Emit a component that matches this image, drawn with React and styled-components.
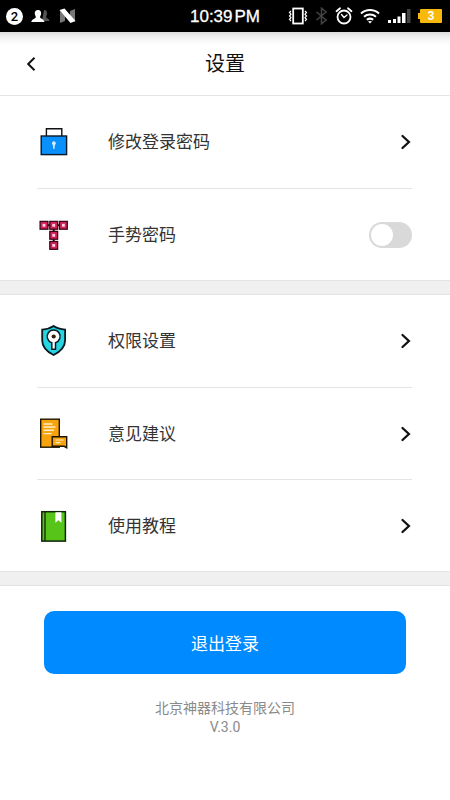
import React, { useState } from "react";
import styled, { createGlobalStyle } from "styled-components";

const GlobalStyle = createGlobalStyle`
  * { box-sizing: border-box; }
  body {
    margin: 0;
    background: #fff;
    color: #333;
    font-family: Roboto, "Noto Sans CJK SC", sans-serif;
  }
  button { font: inherit; color: inherit; border: 0; padding: 0; background: none; cursor: pointer; }
`;

const Page = styled.div`
  display: flex;
  flex-direction: column;
  min-height: 100vh;
  background: #fff;
`;

const StatusBar = styled.div`
  display: grid;
  grid-template-columns: 1fr auto 1fr;
  align-items: center;
  height: 32px;
  padding: 0 8px 0 6px;
  background: #000;
  color: #fff;
`;

const StatusGroup = styled.div`
  display: flex;
  align-items: center;
  justify-content: ${(p) => (p.$end ? "flex-end" : "flex-start")};
  gap: ${(p) => (p.$end ? 7 : 8)}px;
  min-width: 0;
  svg { flex: none; display: block; }
`;

const CountBadge = styled.span`
  width: 17px;
  height: 17px;
  border-radius: 50%;
  background: #fff;
  color: #000;
  font-size: 13px;
  font-weight: 500;
  line-height: 17px;
  text-align: center;
`;

const Clock = styled.time`
  display: flex;
  gap: 2px;
  padding: 2px 0 0 2px;
  font-family: "Liberation Sans", sans-serif;
  font-size: 17px;
  line-height: 20px;
  -webkit-text-stroke: 0.3px #fff;
`;

const Battery = styled.span`
  position: relative;
  width: 22px;
  height: 14px;
  margin-left: 2px;
  border-radius: 1px;
  background: #f8b80c;
  font-size: 12px;
  font-weight: 700;
  line-height: 14px;
  text-align: center;
  &::before {
    content: "";
    position: absolute;
    left: -2px;
    top: 4px;
    width: 2px;
    height: 6px;
    background: #f8b80c;
  }
`;

const Header = styled.header`
  display: grid;
  grid-template-columns: 48px 1fr 48px;
  align-items: center;
  height: 64px;
  border-bottom: 1px solid #e4e4e4;
  background: linear-gradient(#dedede, #f3f3f3 6px, #fff 13px);
`;

const BackButton = styled.button`
  display: flex;
  align-items: center;
  height: 48px;
  && { padding-left: 26px; }
  color: #111;
`;

const Title = styled.h1`
  margin: 0;
  color: #111;
  font-size: 20px;
  font-weight: 400;
  line-height: 28px;
  text-align: center;
`;

const Group = styled.section`
  padding: 0 38px 0 37px;
`;

const Band = styled.div`
  height: 15px;
  border: solid #e4e4e4;
  border-width: 1px 0;
  background: #f0f0f0;
`;

const Row = styled.div`
  display: flex;
  align-items: center;
  width: 100%;
  height: 92px;
  text-align: left;
  & + & { border-top: 1px solid #e4e4e4; }
  > svg { flex: none; }
`;

const Label = styled.span`
  flex: 1;
  margin-left: 39px;
  font-size: 17px;
  line-height: 24px;
`;

const Switch = styled.input`
  appearance: none;
  display: flex;
  align-items: center;
  width: 43px;
  height: 26px;
  margin: 0;
  padding: 2px;
  border-radius: 13px;
  background: ${(p) => (p.checked ? "#008aff" : "#d9d9d9")};
  cursor: pointer;
  &::before {
    content: "";
    width: 22px;
    height: 22px;
    margin-left: ${(p) => (p.checked ? 17 : 0)}px;
    border-radius: 50%;
    background: #fff;
  }
`;

const Footer = styled.footer`
  display: flex;
  flex-direction: column;
  padding: 25px 44px;
`;

const LogoutButton = styled.button`
  height: 63px;
  && { background: #008aff; color: #fff; }
  border-radius: 10px;
  && { font-size: 17px; }
`;

const Company = styled.p`
  margin: 24px 0 0;
  color: #8a8a8a;
  font-size: 14px;
  line-height: 20px;
  text-align: center;
`;

const Version = styled(Company)`
  margin: 0;
  line-height: 19px;
`;

const ChevronRight = () => (
  <svg width="12" height="16" viewBox="0 0 12 16" fill="none" stroke="#111" strokeWidth="2.3" aria-hidden="true">
    <path d="M2.500 2l6.400 6-6.400 6" strokeLinecap="round" />
  </svg>
);

const LockIcon = () => (
  <svg width="32" height="32" aria-hidden="true">
    <path d="M9.4 10V2.7h15.4V10" fill="none" stroke="#111" strokeWidth="1.4" />
    <rect x="4.2" y="10" width="25.400" height="18.6" fill="#0a90fb" stroke="#0b1824" strokeWidth="1.4" />
    <path d="M16.9 15.2a2 2 0 0 1 1 3.7l-.5 4h-1.1l-.4-4a2 2 0 0 1 1-3.7z" fill="#d5edff" />
  </svg>
);

const nodes = [[7, 6.3], [16.7, 6.3], [26.4, 6.3], [16.7, 16.3], [16.7, 26.4]];
const PatternIcon = () => (
  <svg width="32" height="32" aria-hidden="true">
    <path d="M7 6.3h19.4M16.7 6.3v20" stroke="#250812" strokeWidth="2" />
    {nodes.map(([x, y]) => (
      <g key={`${x}-${y}`}>
        <rect x={x - 3.9} y={y - 3.9} width="7.8" height="7.8" fill="#d9205c" stroke="#3a0818" strokeWidth="1.3" />
        <rect x={x - 1.4} y={y - 1.4} width="2.8" height="2.8" fill="#ffd5e3" />
      </g>
    ))}
  </svg>
);

const ShieldIcon = () => (
  <svg width="32" height="32" aria-hidden="true">
    <path d="M16.6 1c3.3 2.3 7.3 3.3 11.5 3.6v10.8c0 6.5-4.5 11-11.5 14.6C9.6 26.4 5.2 21.9 5.2 15.4V4.6C9.4 4.3 13.3 3.3 16.6 1z" fill="#24d5e2" stroke="#0c1a20" strokeWidth="1.8" />
    <path d="M14.8 17.7a6.5 6.5 0 1 1 3.7 0v6.5h-3.7z" fill="#fff" stroke="#0c1a20" strokeWidth="1.5" />
    <circle cx="16.7" cy="11.5" r="2.1" fill="#35200f" />
  </svg>
);

const FeedbackIcon = () => (
  <svg width="32" height="32" aria-hidden="true">
    <rect x="3.7" y="1.2" width="18.6" height="28" fill="#f7a30b" stroke="#1d1404" strokeWidth="1.4" />
    <path d="M6.5 6h9M6.5 9h12M6.5 12.3h10.5M6.5 15.6h8" stroke="#fff0cc" strokeWidth="1.4" />
    <path d="M15.2 18.7h14.5v11l-2.5-1.4h-12z" fill="#f7a30b" stroke="#1d1404" strokeWidth="1.4" />
    <path d="M18.5 22h8M18.5 24.7h5" stroke="#fff0cc" strokeWidth="1.2" />
  </svg>
);

const BookIcon = () => (
  <svg width="32" height="32" aria-hidden="true">
    <rect x="4.8" y="1.7" width="23.6" height="29.4" fill="#57c41a" stroke="#10240a" strokeWidth="1.5" />
    <path d="M8 2v29" stroke="#10240a" strokeWidth="1.3" />
    <path d="M18.4 2.2h6v10.6l-3-2.6-3 2.6z" fill="#fff" />
  </svg>
);

const ContactsIcon = () => (
  <svg width="20" height="14" aria-hidden="true">
    <path d="M13 1c2.6 0 3.3 2 3 4-.2 1.3-.8 1.7-.8 3 0 1.500 3 1.300 3.300 4H11z" fill="#555" />
    <path d="M7 1c2.6 0 3.4 1.900 3.100 4-.2 1.400-1 1.900-1 3.200 0 1.600 4 1.500 4.400 4.800H.3c.4-3.300 4.500-3.200 4.500-4.800C4.800 6.900 4 6.400 3.800 5 3.500 2.900 4.400 1 7 1z" fill="#fff" />
  </svg>
);

const NIcon = () => (
  <svg width="17" height="16" aria-hidden="true">
    <path d="M1 2.500l5 5V13l-5 2zM11 3l5-2v13l-5-4z" fill="#777" />
    <path d="M.5 2L5.500.500 16.500 13l-5 2z" fill="#fff" />
  </svg>
);

const VibrateIcon = () => (
  <svg width="20" height="18" fill="none" stroke="#fff" aria-hidden="true">
    <rect x="5.2" y="1.5" width="9.6" height="15" strokeWidth="1.8" />
    <path d="M3 4L1.5 5.5 3 7.2 1.5 9 3 10.7 1.5 12.3 3 14M17 4l1.5 1.5L17 7.2 18.5 9 17 10.7l1.5 1.6L17 14" strokeWidth="1.2" />
  </svg>
);

const BluetoothIcon = () => (
  <svg width="13" height="18" fill="none" stroke="#444" strokeWidth="1.5" aria-hidden="true">
    <path d="M1.5 5l9.5 8-4.5 3.8V1.2L11 5l-9.500 8" />
  </svg>
);

const AlarmIcon = () => (
  <svg width="18" height="18" fill="none" stroke="#fff" strokeLinecap="round" aria-hidden="true">
    <circle cx="9" cy="10" r="6.5" strokeWidth="1.8" />
    <path d="M1.5 4.2L5 1.3M16.5 4.2L13 1.3" strokeWidth="1.8" />
    <path d="M6.5 7.5L9 10.5l3-2.5" strokeWidth="1.3" />
  </svg>
);

const WifiIcon = () => (
  <svg width="20" height="18" fill="none" stroke="#fff" strokeWidth="2" aria-hidden="true">
    <path d="M1 6.5c5.2-4.6 12.8-4.6 18 0M4 9.8c3.5-3 8.5-3 12 0M6.8 12.8c2-1.5 4.4-1.5 6.4 0" />
    <path d="M8 14.5c1.2-.8 2.8-.8 4 0l-2 2z" fill="#fff" stroke="none" />
  </svg>
);

const SignalIcon = () => (
  <svg width="24" height="16" fill="#fff" aria-hidden="true">
    <path d="M1 12h3v3H1zM6 11h3v4H6zM10.5 8.5h3V15h-3zM15 5h3.5v10H15z" />
    <path d="M20 1h3.5v14H20z" fill="#444" />
  </svg>
);

function LinkRow({ icon, children }) {
  return (
    <Row as="button" type="button">
      {icon}
      <Label>{children}</Label>
      <ChevronRight />
    </Row>
  );
}

export default function App() {
  const [gesture, setGesture] = useState(false);
  return (
    <Page>
      <GlobalStyle />
      <StatusBar>
        <StatusGroup>
          <CountBadge>2</CountBadge>
          <ContactsIcon />
          <NIcon />
        </StatusGroup>
        <Clock><span>10:39</span><span>PM</span></Clock>
        <StatusGroup $end>
          <VibrateIcon />
          <BluetoothIcon />
          <AlarmIcon />
          <WifiIcon />
          <SignalIcon />
          <Battery>3</Battery>
        </StatusGroup>
      </StatusBar>
      <Header>
        <BackButton type="button" aria-label="返回">
          <svg width="10" height="16" fill="none" stroke="currentColor" strokeWidth="2" aria-hidden="true">
            <path d="M8.5 1.8L2.2 8l6.3 6.2" />
          </svg>
        </BackButton>
        <Title>设置</Title>
      </Header>
      <main>
        <Group>
          <LinkRow icon={<LockIcon />}>修改登录密码</LinkRow>
          <Row>
            <PatternIcon />
            <Label as="label" htmlFor="gesture">手势密码</Label>
            <Switch
              id="gesture"
              type="checkbox"
              role="switch"
              checked={gesture}
              onChange={(e) => setGesture(e.target.checked)}
            />
          </Row>
        </Group>
        <Band />
        <Group>
          <LinkRow icon={<ShieldIcon />}>权限设置</LinkRow>
          <LinkRow icon={<FeedbackIcon />}>意见建议</LinkRow>
          <LinkRow icon={<BookIcon />}>使用教程</LinkRow>
        </Group>
        <Band />
      </main>
      <Footer>
        <LogoutButton type="button">退出登录</LogoutButton>
        <Company>北京神器科技有限公司</Company>
        <Version>V.3.0</Version>
      </Footer>
    </Page>
  );
}
